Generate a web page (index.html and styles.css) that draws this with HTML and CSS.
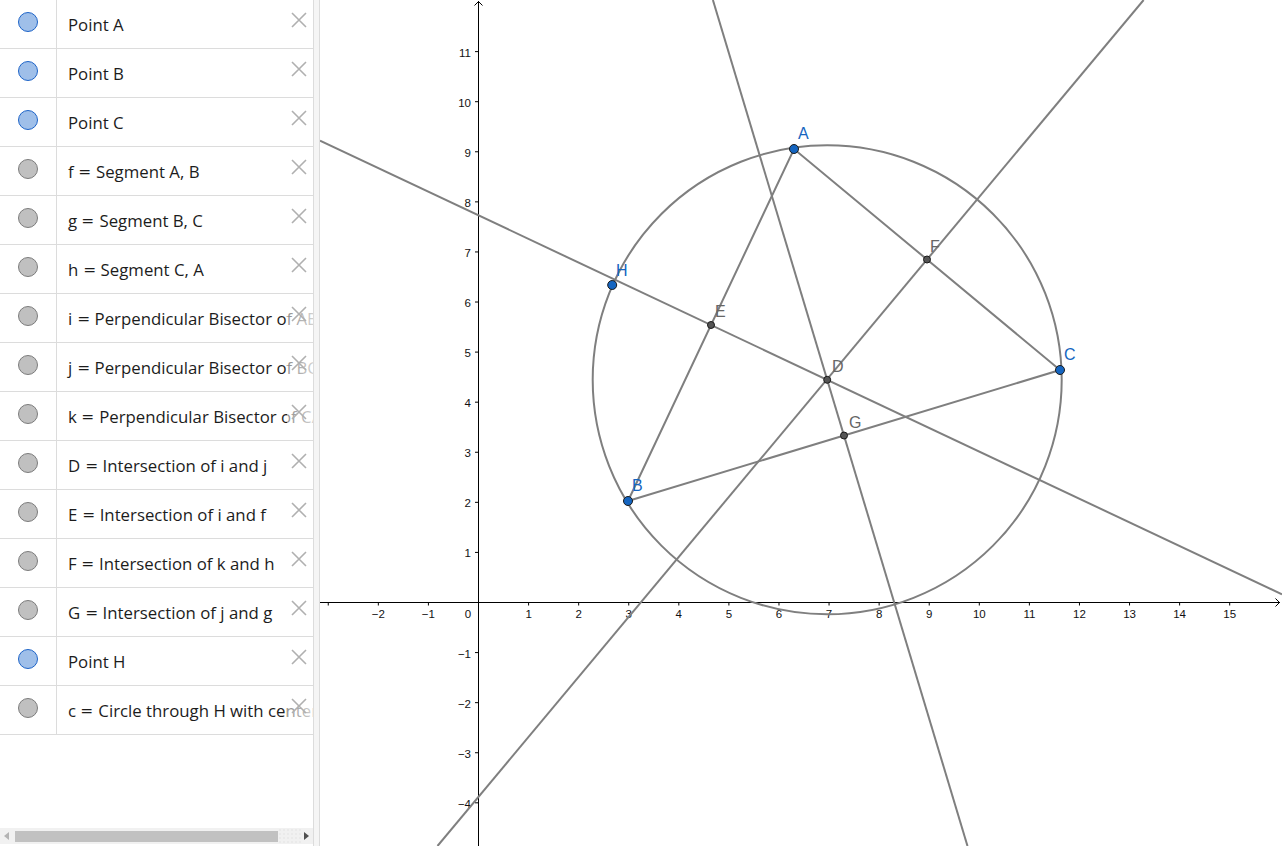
FILE: index.html
```html
<!DOCTYPE html>
<html>
<head>
<meta charset="utf-8">
<link rel="stylesheet" href="styles.css">
</head>
<body>
<div class="app">
  <aside class="algebra">
    <ul class="rows">
      <li class="row"><span class="cell"><span class="marble blue"></span></span><span class="desc">Point A</span><svg class="del" viewBox="0 0 16 16"><path d="M1 1L15 15M15 1L1 15"/></svg></li>
      <li class="row"><span class="cell"><span class="marble blue"></span></span><span class="desc">Point B</span><svg class="del" viewBox="0 0 16 16"><path d="M1 1L15 15M15 1L1 15"/></svg></li>
      <li class="row"><span class="cell"><span class="marble blue"></span></span><span class="desc">Point C</span><svg class="del" viewBox="0 0 16 16"><path d="M1 1L15 15M15 1L1 15"/></svg></li>
      <li class="row"><span class="cell"><span class="marble"></span></span><span class="desc">f <span class="eq">=</span> Segment A, B</span><svg class="del" viewBox="0 0 16 16"><path d="M1 1L15 15M15 1L1 15"/></svg></li>
      <li class="row"><span class="cell"><span class="marble"></span></span><span class="desc">g <span class="eq">=</span> Segment B, C</span><svg class="del" viewBox="0 0 16 16"><path d="M1 1L15 15M15 1L1 15"/></svg></li>
      <li class="row"><span class="cell"><span class="marble"></span></span><span class="desc">h <span class="eq">=</span> Segment C, A</span><svg class="del" viewBox="0 0 16 16"><path d="M1 1L15 15M15 1L1 15"/></svg></li>
      <li class="row"><span class="cell"><span class="marble"></span></span><span class="desc">i <span class="eq">=</span> Perpendicular Bisector of AB</span><svg class="del" viewBox="0 0 16 16"><path d="M1 1L15 15M15 1L1 15"/></svg></li>
      <li class="row"><span class="cell"><span class="marble"></span></span><span class="desc">j <span class="eq">=</span> Perpendicular Bisector of BC</span><svg class="del" viewBox="0 0 16 16"><path d="M1 1L15 15M15 1L1 15"/></svg></li>
      <li class="row"><span class="cell"><span class="marble"></span></span><span class="desc">k <span class="eq">=</span> Perpendicular Bisector of CA</span><svg class="del" viewBox="0 0 16 16"><path d="M1 1L15 15M15 1L1 15"/></svg></li>
      <li class="row"><span class="cell"><span class="marble"></span></span><span class="desc">D <span class="eq">=</span> Intersection of i and j</span><svg class="del" viewBox="0 0 16 16"><path d="M1 1L15 15M15 1L1 15"/></svg></li>
      <li class="row"><span class="cell"><span class="marble"></span></span><span class="desc">E <span class="eq">=</span> Intersection of i and f</span><svg class="del" viewBox="0 0 16 16"><path d="M1 1L15 15M15 1L1 15"/></svg></li>
      <li class="row"><span class="cell"><span class="marble"></span></span><span class="desc">F <span class="eq">=</span> Intersection of k and h</span><svg class="del" viewBox="0 0 16 16"><path d="M1 1L15 15M15 1L1 15"/></svg></li>
      <li class="row"><span class="cell"><span class="marble"></span></span><span class="desc">G <span class="eq">=</span> Intersection of j and g</span><svg class="del" viewBox="0 0 16 16"><path d="M1 1L15 15M15 1L1 15"/></svg></li>
      <li class="row"><span class="cell"><span class="marble blue"></span></span><span class="desc">Point H</span><svg class="del" viewBox="0 0 16 16"><path d="M1 1L15 15M15 1L1 15"/></svg></li>
      <li class="row"><span class="cell"><span class="marble"></span></span><span class="desc">c <span class="eq">=</span> Circle through H with center D</span><svg class="del" viewBox="0 0 16 16"><path d="M1 1L15 15M15 1L1 15"/></svg></li>
    </ul>
    <div class="hscroll">
      <svg class="arrow" viewBox="0 0 6 8"><path d="M5 0L0 4L5 8Z" fill="#b4b4b4"/></svg>
      <span class="thumb"></span>
      <span class="track-rest"></span>
      <svg class="arrow" viewBox="0 0 6 8"><path d="M1 0L6 4L1 8Z" fill="#505050"/></svg>
    </div>
  </aside>
  <div class="splitter"></div>
  <main class="graphics">
    <svg class="canvas" viewBox="320 0 962 846" width="962" height="846">
      <g class="axes">
        <line x1="320" y1="602.5" x2="1280" y2="602.5"/>
        <polyline points="1275.5,598.5 1279.5,602.5 1275.5,606.5"/>
        <line x1="478.5" y1="846" x2="478.5" y2="1"/>
        <polyline points="474.5,5.5 478.5,1.5 482.5,5.5"/>
        <path d="M328.26 602.5v3 M378.34 602.5v3 M428.42 602.5v3 M528.58 602.5v3 M578.66 602.5v3 M628.74 602.5v3 M678.82 602.5v3 M728.9 602.5v3 M778.98 602.5v3 M829.06 602.5v3 M879.14 602.5v3 M929.22 602.5v3 M979.3 602.5v3 M1029.38 602.5v3 M1079.46 602.5v3 M1129.54 602.5v3 M1179.62 602.5v3 M1229.7 602.5v3"/>
        <path d="M475 552.42h3.5 M475 502.34h3.5 M475 452.26h3.5 M475 402.18h3.5 M475 352.1h3.5 M475 302.02h3.5 M475 251.94h3.5 M475 201.86h3.5 M475 151.78h3.5 M475 101.7h3.5 M475 51.62h3.5 M475 652.58h3.5 M475 702.66h3.5 M475 752.74h3.5 M475 802.82h3.5"/>
      </g>
      <g class="ticklabels xl">
        <text x="378.34" y="617.5">−2</text>
        <text x="428.42" y="617.5">−1</text>
        <text x="468" y="617.5">0</text>
        <text x="528.58" y="617.5">1</text>
        <text x="578.66" y="617.5">2</text>
        <text x="628.74" y="617.5">3</text>
        <text x="678.82" y="617.5">4</text>
        <text x="728.9" y="617.5">5</text>
        <text x="778.98" y="617.5">6</text>
        <text x="829.06" y="617.5">7</text>
        <text x="879.14" y="617.5">8</text>
        <text x="929.22" y="617.5">9</text>
        <text x="979.3" y="617.5">10</text>
        <text x="1029.38" y="617.5">11</text>
        <text x="1079.46" y="617.5">12</text>
        <text x="1129.54" y="617.5">13</text>
        <text x="1179.62" y="617.5">14</text>
        <text x="1229.7" y="617.5">15</text>
      </g>
      <g class="ticklabels yl">
        <text x="471" y="56.5">11</text>
        <text x="471" y="106.6">10</text>
        <text x="471" y="156.7">9</text>
        <text x="471" y="206.8">8</text>
        <text x="471" y="256.8">7</text>
        <text x="471" y="306.9">6</text>
        <text x="471" y="357">5</text>
        <text x="471" y="407.1">4</text>
        <text x="471" y="457.2">3</text>
        <text x="471" y="507.2">2</text>
        <text x="471" y="557.3">1</text>
        <text x="471" y="657.5">−1</text>
        <text x="471" y="707.6">−2</text>
        <text x="471" y="757.6">−3</text>
        <text x="471" y="807.7">−4</text>
      </g>
      <g class="objects">
        <line x1="320" y1="140.6" x2="1282" y2="594.3"/>
        <line x1="712.9" y1="0" x2="967.5" y2="846"/>
        <line x1="1143.6" y1="0" x2="437.5" y2="846"/>
        <circle cx="827.2" cy="379.8" r="234.5"/>
        <polyline points="628,501 794,149 1060,370 628,501"/>
      </g>
      <g class="free">
        <circle cx="794" cy="149" r="4.5"/>
        <circle cx="628" cy="501" r="4.5"/>
        <circle cx="1060" cy="370" r="4.5"/>
        <circle cx="612.2" cy="285" r="4.5"/>
      </g>
      <g class="dep">
        <circle cx="827.2" cy="379.8" r="3.5"/>
        <circle cx="711" cy="325" r="3.5"/>
        <circle cx="927" cy="259.5" r="3.5"/>
        <circle cx="844" cy="435.5" r="3.5"/>
      </g>
      <g class="labels blue">
        <text x="798" y="139">A</text>
        <text x="632" y="491">B</text>
        <text x="1064" y="360">C</text>
        <text x="616" y="276">H</text>
      </g>
      <g class="labels gray">
        <text x="832" y="372">D</text>
        <text x="715" y="317">E</text>
        <text x="930" y="252">F</text>
        <text x="849" y="428">G</text>
      </g>
    </svg>
  </main>
</div>
</body>
</html>
```
FILE: styles.css
```css
* { box-sizing: border-box; }
html, body {
  margin: 0;
  padding: 0;
  background: #ffffff;
}
body {
  font-family: "Open Sans", "Liberation Sans", sans-serif;
}
.app {
  display: flex;
  width: 1282px;
  height: 846px;
  overflow: hidden;
}
.algebra {
  width: 314px;
  height: 846px;
  border-right: 1px solid #dcdcdc;
  display: flex;
  flex-direction: column;
  overflow: hidden;
}
.rows {
  list-style: none;
  margin: 0;
  padding: 0;
  flex: 1;
}
.row {
  position: relative;
  display: flex;
  height: 49px;
  border-bottom: 1px solid #dcdcdc;
}
.cell {
  width: 57px;
  flex: none;
  border-right: 1px solid #dcdcdc;
  display: flex;
  justify-content: center;
  padding-top: 12px;
  padding-right: 1px;
}
.marble {
  width: 20px;
  height: 20px;
  border-radius: 50%;
  background: #c0c0c0;
  border: 1px solid #7c7c7c;
}
.marble.blue {
  background: #9fbfe9;
  border-color: #1e64c8;
}
.desc {
  padding-left: 11px;
  padding-top: 13px;
  font-size: 16.8px;
  line-height: 24px;
  color: #1c1c1c;
  white-space: nowrap;
}
.eq {
  display: inline-block;
  transform: scaleX(1.25);
  margin: 0 2px;
}
.row::after {
  content: "";
  position: absolute;
  top: 0;
  right: 0;
  width: 26px;
  height: 48px;
  background: linear-gradient(to right, rgba(255,255,255,0.5), rgba(255,255,255,0.8));
}
.del {
  position: absolute;
  left: 291px;
  top: 12px;
  width: 16px;
  height: 16px;
  z-index: 1;
  fill: none;
  stroke: #b0b0b0;
  stroke-width: 1.6;
}
.hscroll {
  flex: none;
  height: 16px;
  margin-bottom: 2px;
  background: #f1f1f1;
  display: flex;
  align-items: center;
  padding: 0 4px 0 4px;
}
.arrow {
  width: 6px;
  height: 8px;
  flex: none;
}
.thumb {
  margin-left: 5px;
  width: 263px;
  height: 11px;
  background: #c1c1c1;
}
.track-rest {
  flex: 1;
  align-self: stretch;
  background: radial-gradient(circle, #e2e2e2 0.6px, transparent 0.8px) 0 0 / 4px 4px;
}
.splitter {
  width: 6px;
  flex: none;
  background: #f5f5f5;
  border-right: 1px solid #dcdcdc;
}
.graphics {
  flex: 1;
  height: 846px;
  overflow: hidden;
}
.canvas {
  display: block;
}
.axes line, .axes polyline, .axes path {
  stroke: #000;
  stroke-width: 1;
  fill: none;
}
.ticklabels {
  font-family: "Liberation Sans", Arial, sans-serif;
  font-size: 11.5px;
  fill: #111;
}
.xl text { text-anchor: middle; }
.yl text { text-anchor: end; }
.objects line, .objects circle, .objects polyline {
  stroke: #7f7f7f;
  stroke-width: 2;
  fill: none;
}
.free circle {
  fill: #1565c0;
  stroke: #1a1a1a;
  stroke-width: 1;
}
.dep circle {
  fill: #555555;
  stroke: #1a1a1a;
  stroke-width: 1;
}
.labels {
  font-family: "Liberation Sans", Arial, sans-serif;
  font-size: 16px;
}
.labels.blue { fill: #1565c0; }
.labels.gray { fill: #666666; }
```
